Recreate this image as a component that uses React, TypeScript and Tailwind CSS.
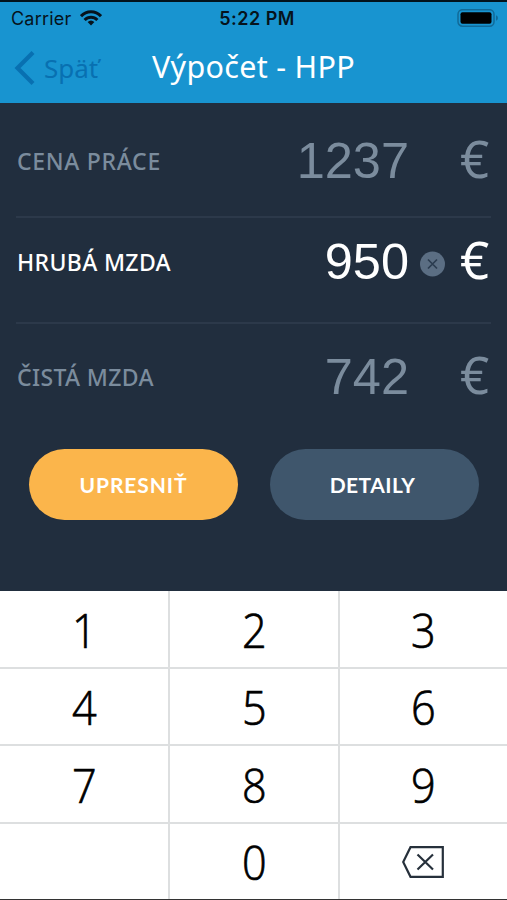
import React from "react";

const labelFont = "font-['Noto_Sans',sans-serif]";
const digitFont = "font-['Liberation_Sans',Arial,sans-serif]";

function StatusBar() {
  return (
    <div className="flex h-[32px] items-center justify-between pl-[11px] pr-2 font-['Inter',sans-serif] text-[18px] leading-none text-[#06131c]">
      <div className="flex w-[190px] items-center gap-[9px]">
        <span className="pt-px tracking-[0.2px]">Carrier</span>
        <svg width="22" height="16" viewBox="0 0 22 16" fill="none" stroke="currentColor" strokeWidth="3">
          <path d="M1 6.200C6.500 .3 15.500 .3 21 6.200" />
          <path d="M4.600 10C8.300 6.200 13.700 6.200 17.400 10" />
          <path d="M7.600 12Q11 8.800 14.400 12L11 15.600Z" fill="currentColor" stroke="none" />
        </svg>
      </div>
      <span className="whitespace-nowrap pl-1 pt-px text-[18px] font-semibold tracking-[0.500px]">5:22 PM</span>
      <div className="flex w-[190px] justify-end">
        <svg width="42" height="18" viewBox="0 0 42 18">
          <rect x="1" y="0.700" width="36" height="16.500" rx="4.500" fill="none" stroke="#116a98" strokeWidth="1.500" />
          <rect x="3.500" y="3.200" width="31" height="11.500" rx="2" fill="#000" />
          <path d="M39 6.300Q41 7 41 9Q41 11 39 11.700Z" fill="#116a98" />
        </svg>
      </div>
    </div>
  );
}

function NavBar() {
  return (
    <div className="flex h-[67px] items-center">
      <div className="flex w-[152px] items-center pl-[14px] text-[#0870b1]">
        <svg width="21" height="34" viewBox="0 0 21 34" fill="none" stroke="currentColor" strokeWidth="4.200">
          <path d="M19 1.500L3.500 17L19 32.500" />
        </svg>
        <span className={`${labelFont} ml-[9px] text-[26px] leading-none`}>Späť</span>
      </div>
      <h1 className={`${labelFont} whitespace-nowrap pb-[3px] text-[30.500px] font-normal leading-none tracking-[0.300px] text-white`}>Výpočet - HPP</h1>
    </div>
  );
}

type RowProps = { label: string; value: string; active?: boolean; box: string; labelBox: string };

function WageRow({ label, value, active = false, box, labelBox }: RowProps) {
  return (
    <div className={`flex items-center ${box} ${active ? "text-white" : "text-[#7b8c9d]"}`}>
      <span className={`${labelFont} ${labelBox} w-[200px] whitespace-nowrap pl-px text-[23px] font-medium leading-none`}>{label}</span>
      <span className={`${digitFont} flex-1 pt-[3px] text-right text-[50.500px] leading-none`}>{value}</span>
      <div className="flex w-[48px] items-center justify-center pt-[5px]">
        {active && (
          <svg width="26" height="26" viewBox="0 0 26 26">
            <circle cx="12.500" cy="13" r="12.500" fill="#5b6e83" />
            <path d="M8 8.500L17 17.500M17 8.500L8 17.500" stroke="#2b3c50" strokeWidth="1.700" />
          </svg>
        )}
      </div>
      <span className={`${labelFont} w-[34px] pb-[3px] pl-[3px] text-[51px] leading-none`}>€</span>
    </div>
  );
}

function Key({ children }: { children?: React.ReactNode }) {
  return <button className="flex items-center justify-center bg-white leading-none">{children}</button>;
}

export default function App() {
  return (
    <div className="flex h-[900px] w-[507px] flex-col overflow-hidden bg-[#212e3e]">
      <header className="h-[103px] border-t-2 border-[#02131d] bg-[#1894d0]">
        <StatusBar />
        <NavBar />
      </header>
      <main className="flex h-[488px] flex-col px-4">
        <WageRow label="CENA PRÁCE" value="1237" box="h-[113px]" labelBox="pt-[3px] tracking-[0.700px]" />
        <div className="h-0.5 bg-[#2c394a]" />
        <WageRow label="HRUBÁ MZDA" value="950" active box="h-[104px] pb-[18px]" labelBox="pt-[2px] tracking-[0.350px]" />
        <div className="h-0.5 bg-[#2c394a]" />
        <WageRow label="ČISTÁ MZDA" value="742" box="h-[104px]" labelBox="pt-[2px] tracking-[0.350px]" />
        <div className="mt-[21px] flex gap-8 pl-[13px] font-['Lato',sans-serif] text-[21px] font-bold text-white">
          <button className="h-[71px] w-[209px] rounded-full bg-[#fbb54b] tracking-[0.900px]">UPRESNIŤ</button>
          <button className="h-[71px] w-[209px] rounded-full bg-[#3f566c] pr-1 tracking-[0.450px]">DETAILY</button>
        </div>
      </main>
      <div className="grid h-[309px] grid-cols-[168px_168px_167px] grid-rows-[76px_75px_76px_75px] gap-[2px] border-b border-[#333] bg-[#dddfe0] font-['Open_Sans',sans-serif] text-[47px] text-black">
        {["1", "2", "3", "4", "5", "6", "7", "8", "9", "", "0"].map((k, i) => (
          <Key key={i}>
            <span className="scale-x-[0.92] pt-[2px] font-light [-webkit-text-stroke:0.7px_#000]">{k}</span>
          </Key>
        ))}
        <Key>
          <svg className="mr-[2px]" width="42" height="32" viewBox="0 0 42 32" fill="none" stroke="#26303b" strokeWidth="2.200">
            <path d="M8.500 1.200H40.800V30.800H8.500L1.200 16Z" />
            <path d="M15.500 8.500L31 23.500M31 8.500L15.500 23.500" />
          </svg>
        </Key>
      </div>
    </div>
  );
}
